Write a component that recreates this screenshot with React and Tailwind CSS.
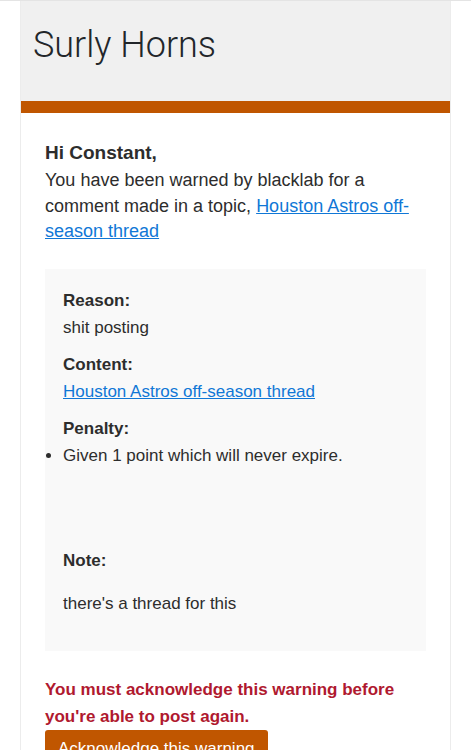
import React from "react";

const Label = ({ children, className = "" }) => (
  <div className={`font-bold text-[17px] leading-[27px] ${className}`}>{children}</div>
);

const App = () => {
  return (
    <div className="min-h-[750px] bg-white border-t border-[#e4e4e4] font-['Liberation_Sans',Arial,sans-serif] text-[#2d2d2d]">
      <div className="mx-[20px] border-x border-[#ececec] min-h-[749px]">
        {/* Header */}
        <div className="h-[100px] bg-[#f0f0f0] pl-[12px] pt-[22px]">
          <h1 className="font-['Roboto',sans-serif] font-light text-[36px] leading-[44px] text-[#22262a]">
            Surly Horns
          </h1>
        </div>
        <div className="h-[12px] bg-[#c05600]" />

        {/* Body */}
        <div className="px-[24px] pt-[27px]">
          <div className="font-bold text-[19px] leading-[26px]">Hi Constant,</div>
          <p className="text-[18px] leading-[25.5px] mt-[2px]">
            You have been warned by blacklab for a comment made in a topic,{" "}
            <a href="#" className="text-[#1077d6] underline">
              Houston Astros off-season thread
            </a>
          </p>

          {/* Warning details */}
          <div className="mt-[24px] bg-[#f9f9f9] px-[18px] pt-[18px] pb-[34px] text-[17px] leading-[27px]">
            <Label>Reason:</Label>
            <div>shit posting</div>

            <Label className="mt-[10px]">Content:</Label>
            <a href="#" className="text-[#1077d6] underline">
              Houston Astros off-season thread
            </a>

            <Label className="mt-[10px]">Penalty:</Label>
            <ul className="list-disc list-outside">
              <li>Given 1 point which will never expire.</li>
            </ul>

            <Label className="mt-[78px]">Note:</Label>
            <div className="mt-[16px]">there's a thread for this</div>
          </div>

          <p className="mt-[25px] font-bold text-[17px] leading-[27px] text-[#b0192f]">
            You must acknowledge this warning before you're able to post again.
          </p>
          <button className="bg-[#c05600] text-white text-[17px] leading-[24px] px-[13px] pt-[7px] pb-[8px] rounded-[3px]">
            Acknowledge this warning
          </button>
        </div>
      </div>
    </div>
  );
};

export default App;
